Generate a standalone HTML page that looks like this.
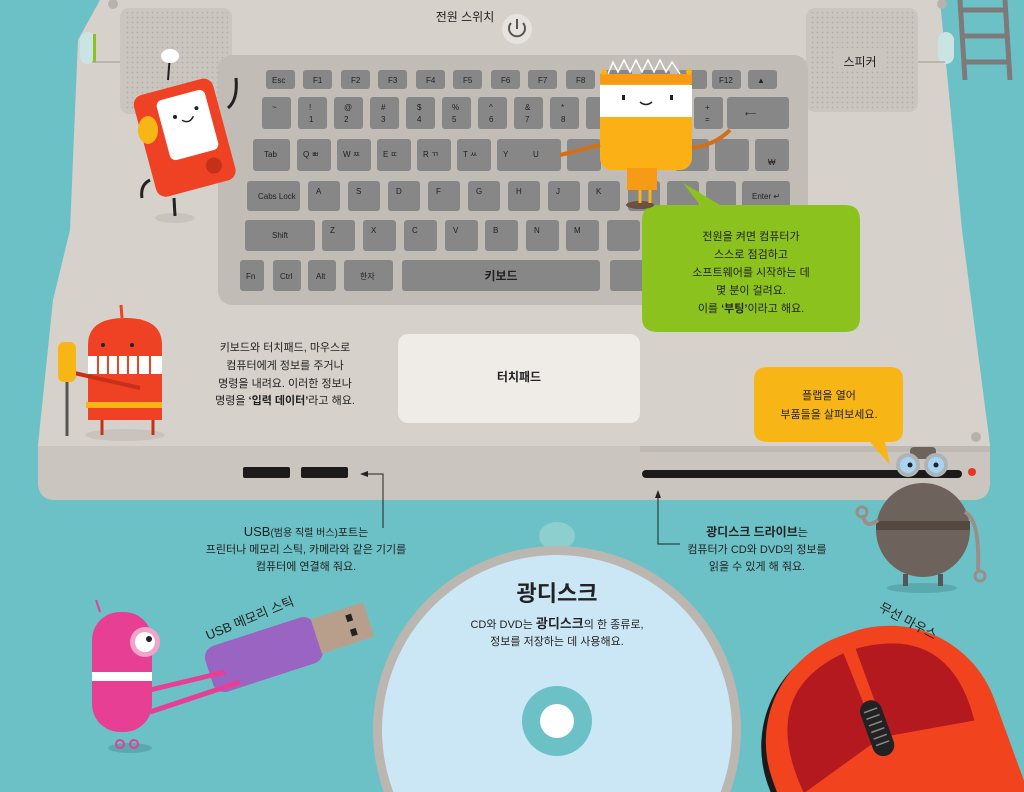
<!DOCTYPE html>
<html><head><meta charset="utf-8"><style>
html,body{margin:0;padding:0;width:1024px;height:792px;overflow:hidden;background:#6cc1c7}
svg{display:block}
text{font-family:"Liberation Sans","Noto Sans CJK KR",sans-serif;fill:#222}
.k{fill:#878787}
.kt{font-size:8px;fill:#e8e8e8}
.t{font-size:11px;text-anchor:middle}
.b{font-weight:bold}
</style></head><body>
<svg width="1024" height="792" viewBox="0 0 1024 792">
<rect width="1024" height="792" fill="#6cc1c7"/>
<g stroke="#7d7b79" stroke-width="5" fill="none"><line x1="960" y1="0" x2="965" y2="80"/><line x1="1005" y1="0" x2="1010" y2="80"/><line x1="962" y1="10" x2="1006" y2="10"/><line x1="963" y1="36" x2="1008" y2="36"/><line x1="964" y1="62" x2="1009" y2="62"/></g>
<path d="M100,0 L940,0 L962,230 L990,445 L990,482 Q990,500 972,500 L56,500 Q38,500 38,482 L38,445 L53,300 L70,230 L78,40 Z" fill="#d6d1cb"/>
<path d="M38,446 L990,446 L990,482 Q990,500 972,500 L56,500 Q38,500 38,482 Z" fill="#cbc5bf"/>
<path d="M640,446 L990,446 L990,452 L640,452 Z" fill="#bfb9b3"/>
<rect x="80" y="32" width="16" height="32" rx="8" fill="#c9e4e2"/><rect x="93" y="34" width="3" height="28" fill="#8cc21e"/>
<rect x="938" y="32" width="16" height="32" rx="8" fill="#c9e4e2"/>
<line x1="92" y1="62" x2="945" y2="62" stroke="#a9a39d" stroke-width="1.2"/>
<circle cx="113" cy="4" r="5" fill="#b8b2ac"/><circle cx="942" cy="4" r="5" fill="#b8b2ac"/><circle cx="976" cy="437" r="5" fill="#b8b2ac"/>
<defs><pattern id="d" width="5" height="5" patternUnits="userSpaceOnUse"><circle cx="2.5" cy="2.5" r="0.9" fill="#b3ada7"/></pattern></defs>
<rect x="120" y="8" width="112" height="106" rx="9" fill="#cbc5bf"/><rect x="124" y="12" width="104" height="98" fill="url(#d)"/>
<rect x="806" y="8" width="112" height="104" rx="9" fill="#cbc5bf"/><rect x="810" y="12" width="104" height="96" fill="url(#d)"/>
<rect x="836" y="48" width="48" height="20" fill="#cbc5bf"/>
<text x="860" y="66" style="font-size:12px;text-anchor:middle">스피커</text>
<circle cx="517" cy="29" r="15" fill="#e6e2de"/>
<path d="M511,23 A8,8 0 1 0 523,23" fill="none" stroke="#555" stroke-width="2"/><line x1="517" y1="19" x2="517" y2="29" stroke="#555" stroke-width="2"/>
<text x="465" y="21" style="font-size:12px;text-anchor:middle">전원 스위치</text>
<rect x="218" y="55" width="590" height="250" rx="14" fill="#c2bcb6"/>
<g class="k">
<rect x="266" y="70" width="29" height="19" rx="3"/>
<rect x="303" y="70" width="29" height="19" rx="3"/><rect x="341" y="70" width="29" height="19" rx="3"/><rect x="378" y="70" width="29" height="19" rx="3"/><rect x="416" y="70" width="29" height="19" rx="3"/><rect x="453" y="70" width="29" height="19" rx="3"/><rect x="491" y="70" width="29" height="19" rx="3"/><rect x="528" y="70" width="29" height="19" rx="3"/><rect x="566" y="70" width="29" height="19" rx="3"/><rect x="603" y="70" width="29" height="19" rx="3"/><rect x="641" y="70" width="29" height="19" rx="3"/><rect x="678" y="70" width="29" height="19" rx="3"/><rect x="712" y="70" width="29" height="19" rx="3"/><rect x="748" y="70" width="29" height="19" rx="3"/>
<rect x="262" y="97" width="29" height="32" rx="3"/><rect x="298" y="97" width="29" height="32" rx="3"/><rect x="334" y="97" width="29" height="32" rx="3"/><rect x="370" y="97" width="29" height="32" rx="3"/><rect x="406" y="97" width="29" height="32" rx="3"/><rect x="442" y="97" width="29" height="32" rx="3"/><rect x="478" y="97" width="29" height="32" rx="3"/><rect x="514" y="97" width="29" height="32" rx="3"/><rect x="550" y="97" width="29" height="32" rx="3"/><rect x="586" y="97" width="29" height="32" rx="3"/><rect x="622" y="97" width="29" height="32" rx="3"/><rect x="658" y="97" width="29" height="32" rx="3"/><rect x="694" y="97" width="29" height="32" rx="3"/><rect x="727" y="97" width="62" height="32" rx="3"/>
<rect x="253" y="139" width="37" height="32" rx="3"/><rect x="297" y="139" width="34" height="32" rx="3"/><rect x="337" y="139" width="34" height="32" rx="3"/><rect x="377" y="139" width="34" height="32" rx="3"/><rect x="417" y="139" width="34" height="32" rx="3"/><rect x="457" y="139" width="34" height="32" rx="3"/><rect x="497" y="139" width="34" height="32" rx="3"/><rect x="527" y="139" width="34" height="32" rx="3"/><rect x="567" y="139" width="34" height="32" rx="3"/><rect x="675" y="139" width="34" height="32" rx="3"/><rect x="715" y="139" width="34" height="32" rx="3"/><rect x="755" y="139" width="34" height="32" rx="3"/>
<rect x="247" y="181" width="53" height="30" rx="3"/><rect x="308" y="181" width="32" height="30" rx="3"/><rect x="348" y="181" width="32" height="30" rx="3"/><rect x="388" y="181" width="32" height="30" rx="3"/><rect x="428" y="181" width="32" height="30" rx="3"/><rect x="468" y="181" width="32" height="30" rx="3"/><rect x="508" y="181" width="32" height="30" rx="3"/><rect x="548" y="181" width="32" height="30" rx="3"/><rect x="588" y="181" width="32" height="30" rx="3"/><rect x="628" y="181" width="32" height="30" rx="3"/><rect x="667" y="181" width="32" height="30" rx="3"/><rect x="706" y="181" width="30" height="30" rx="3"/><rect x="742" y="181" width="48" height="30" rx="3"/>
<rect x="245" y="220" width="70" height="31" rx="3"/><rect x="322" y="220" width="33" height="31" rx="3"/><rect x="363" y="220" width="33" height="31" rx="3"/><rect x="404" y="220" width="33" height="31" rx="3"/><rect x="445" y="220" width="33" height="31" rx="3"/><rect x="485" y="220" width="33" height="31" rx="3"/><rect x="526" y="220" width="33" height="31" rx="3"/><rect x="566" y="220" width="33" height="31" rx="3"/><rect x="607" y="220" width="33" height="31" rx="3"/>
<rect x="240" y="260" width="24" height="31" rx="3"/><rect x="273" y="260" width="28" height="31" rx="3"/><rect x="308" y="260" width="28" height="31" rx="3"/><rect x="344" y="260" width="49" height="31" rx="3"/><rect x="402" y="260" width="198" height="31" rx="3"/><rect x="610" y="260" width="40" height="31" rx="3"/>
</g>
<g class="kt">
<text x="272" y="83">Esc</text><text x="313" y="83">F1</text><text x="351" y="83">F2</text><text x="388" y="83">F3</text><text x="426" y="83">F4</text><text x="463" y="83">F5</text><text x="501" y="83">F6</text><text x="538" y="83">F7</text><text x="576" y="83">F8</text><text x="719" y="83">F12</text><text x="757" y="83">▲</text>
<text x="272" y="110">~</text><text x="309" y="110">!</text><text x="344" y="110">@</text><text x="381" y="110">#</text><text x="417" y="110">$</text><text x="452" y="110">%</text><text x="489" y="110">^</text><text x="525" y="110">&amp;</text><text x="561" y="110">*</text><text x="705" y="110">+</text>
<text x="309" y="122">1</text><text x="344" y="122">2</text><text x="381" y="122">3</text><text x="417" y="122">4</text><text x="452" y="122">5</text><text x="489" y="122">6</text><text x="525" y="122">7</text><text x="561" y="122">8</text><text x="705" y="122">=</text><text x="745" y="116">⟵</text>
<text x="264" y="157">Tab</text><text x="303" y="157">Q ㅃ</text><text x="343" y="157">W ㅉ</text><text x="383" y="157">E ㄸ</text><text x="423" y="157">R ㄲ</text><text x="463" y="157">T ㅆ</text><text x="503" y="157">Y</text><text x="533" y="157">U</text><text x="768" y="165">₩</text>
<text x="258" y="199">Cabs Lock</text><text x="316" y="194">A</text><text x="356" y="194">S</text><text x="396" y="194">D</text><text x="436" y="194">F</text><text x="476" y="194">G</text><text x="516" y="194">H</text><text x="556" y="194">J</text><text x="596" y="194">K</text><text x="752" y="199">Enter ↵</text>
<text x="272" y="238">Shift</text><text x="330" y="233">Z</text><text x="371" y="233">X</text><text x="412" y="233">C</text><text x="453" y="233">V</text><text x="493" y="233">B</text><text x="534" y="233">N</text><text x="574" y="233">M</text>
<text x="246" y="279">Fn</text><text x="280" y="279">Ctrl</text><text x="316" y="279">Alt</text><text x="360" y="279">한자</text>
</g>
<text x="501" y="280" style="font-size:12px;text-anchor:middle" class="b">키보드</text>
<rect x="398" y="334" width="242" height="89" rx="10" fill="#efece8"/>
<text x="519" y="381" style="font-size:12px;text-anchor:middle" class="b">터치패드</text>
<rect x="243" y="467" width="47" height="11" rx="2" fill="#1c1a1a"/><rect x="301" y="467" width="47" height="11" rx="2" fill="#1c1a1a"/>
<rect x="642" y="470" width="320" height="8" rx="4" fill="#1c1a1a"/>
<circle cx="972" cy="472" r="4" fill="#e8361e"/>
<path d="M365,474 L383,474 L383,528" fill="none" stroke="#222" stroke-width="1"/><path d="M360,474 L368,471 L368,477Z" fill="#222"/>
<path d="M658,496 L658,544 L680,544" fill="none" stroke="#222" stroke-width="1"/><path d="M658,490 L655,498 L661,498Z" fill="#222"/>
<path d="M660,205 L700,205 L683,183 L720,205 L845,205 Q860,205 860,220 L860,318 Q860,332 845,332 L658,332 Q642,332 642,318 L642,220 Q642,205 660,205Z" fill="#8cc21e"/>
<g class="t"><text x="751" y="240">전원을 켜면 컴퓨터가</text><text x="751" y="258">스스로 점검하고</text><text x="751" y="276">소프트웨어를 시작하는 데</text><text x="751" y="294">몇 분이 걸려요.</text><text x="751" y="312">이를 <tspan class="b">‘부팅’</tspan>이라고 해요.</text></g>
<path d="M768,367 L890,367 Q903,367 903,380 L903,430 Q903,442 890,442 L885,442 L890,465 L870,442 L768,442 Q754,442 754,430 L754,380 Q754,367 768,367Z" fill="#f8b616"/>
<g class="t"><text x="829" y="399">플랩을 열어</text><text x="829" y="418">부품들을 살펴보세요.</text></g>
<g class="t"><text x="285" y="351">키보드와 터치패드, 마우스로</text><text x="285" y="369">컴퓨터에게 정보를 주거나</text><text x="285" y="387">명령을 내려요. 이러한 정보나</text><text x="285" y="404">명령을 <tspan class="b">‘입력 데이터’</tspan>라고 해요.</text></g>
<g class="t"><text x="306" y="536"><tspan style="font-size:13px">USB</tspan><tspan style="font-size:10px">(범용 직렬 버스)</tspan>포트는</text><text x="306" y="553">프린터나 메모리 스틱, 카메라와 같은 기기를</text><text x="306" y="570">컴퓨터에 연결해 줘요.</text></g>
<g class="t"><text x="757" y="536" class="b" style="font-size:12px">광디스크 드라이브<tspan style="font-weight:normal;font-size:11px">는</tspan></text><text x="757" y="553">컴퓨터가 CD와 DVD의 정보를</text><text x="757" y="570">읽을 수 있게 해 줘요.</text></g>
<ellipse cx="557" cy="536" rx="18" ry="14" fill="#8ccfce"/>
<circle cx="557" cy="730" r="184" fill="#bcb6b0"/>
<circle cx="557" cy="730" r="175" fill="#cbe7f6"/>
<circle cx="557" cy="721" r="35" fill="#6cc1c7"/><circle cx="557" cy="721" r="17" fill="#fff"/>
<text x="557" y="601" class="b" style="font-size:22px;text-anchor:middle">광디스크</text>
<g class="t"><text x="557" y="628">CD와 DVD는 <tspan class="b" style="font-size:13px">광디스크</tspan>의 한 종류로,</text><text x="557" y="645">정보를 저장하는 데 사용해요.</text></g>
<g transform="translate(-22,6) rotate(-20 890 700)">
<rect x="769" y="628" width="236" height="330" rx="112" fill="#1a1a1a"/>
<rect x="775" y="625" width="236" height="330" rx="112" fill="#f2431f"/>
<path d="M800,760 Q790,650 885,642 L888,735 Z" fill="#b3191f"/>
<path d="M898,642 Q995,650 985,750 L898,735 Z" fill="#b3191f"/>
<rect x="880" y="695" width="22" height="58" rx="11" fill="#222"/>
<g stroke="#888" stroke-width="1.5"><line x1="884" y1="705" x2="898" y2="705"/><line x1="884" y1="712" x2="898" y2="712"/><line x1="884" y1="719" x2="898" y2="719"/><line x1="884" y1="726" x2="898" y2="726"/><line x1="884" y1="733" x2="898" y2="733"/><line x1="884" y1="740" x2="898" y2="740"/></g>
</g>
<text x="0" y="0" transform="translate(878,610) rotate(28)" style="font-size:13px">무선 마우스</text>
<ellipse cx="922" cy="588" rx="35" ry="5" fill="#5aa9ae"/>
<circle cx="923" cy="530" r="47" fill="#6d625c"/>
<rect x="876" y="521" width="94" height="9" fill="#55483f"/>
<rect x="910" y="447" width="26" height="12" rx="4" fill="#6d625c"/>
<circle cx="908" cy="465" r="12" fill="#aeb4b4"/><circle cx="908" cy="465" r="8" fill="#a9d3f5"/><circle cx="910" cy="465" r="2.5" fill="#222"/>
<circle cx="936" cy="465" r="12" fill="#aeb4b4"/><circle cx="936" cy="465" r="8" fill="#a9d3f5"/><circle cx="936" cy="465" r="2.5" fill="#222"/>
<path d="M878,520 Q865,530 863,515" fill="none" stroke="#9a8f88" stroke-width="4"/><circle cx="862" cy="512" r="5" fill="none" stroke="#9a8f88" stroke-width="3"/>
<path d="M965,512 Q980,520 978,570" fill="none" stroke="#9a8f88" stroke-width="4"/><circle cx="980" cy="576" r="5" fill="none" stroke="#9a8f88" stroke-width="3"/>
<rect x="903" y="574" width="5" height="12" fill="#555"/><rect x="938" y="574" width="5" height="12" fill="#555"/>
<ellipse cx="125" cy="435" rx="40" ry="6" fill="#c9c3bd"/>
<path d="M88,345 Q88,318 125,318 Q162,318 162,345 L162,420 L88,420 Z" fill="#ef4123"/>
<line x1="122" y1="318" x2="121" y2="305" stroke="#ef4123" stroke-width="3"/>
<rect x="88" y="356" width="74" height="18" fill="#fff"/><g stroke="#ef4123" stroke-width="2"><line x1="98" y1="356" x2="98" y2="374"/><line x1="108" y1="356" x2="108" y2="374"/><line x1="118" y1="356" x2="118" y2="374"/><line x1="128" y1="356" x2="128" y2="374"/><line x1="138" y1="356" x2="138" y2="374"/><line x1="150" y1="356" x2="150" y2="374"/></g>
<circle cx="103" cy="345" r="2" fill="#222"/><circle cx="132" cy="345" r="2" fill="#222"/>
<rect x="86" y="402" width="76" height="6" fill="#f8b616"/>
<line x1="70" y1="372" x2="140" y2="388" stroke="#c62f18" stroke-width="4"/>
<rect x="58" y="342" width="18" height="40" rx="6" fill="#f8b616"/><line x1="67" y1="382" x2="67" y2="436" stroke="#555" stroke-width="3"/>
<line x1="102" y1="420" x2="102" y2="435" stroke="#c62f18" stroke-width="3"/><line x1="153" y1="420" x2="153" y2="435" stroke="#c62f18" stroke-width="3"/>
<ellipse cx="175" cy="218" rx="20" ry="5" fill="#c9c3bd"/>
<g transform="rotate(-15 185 135)">
<rect x="143" y="85" width="82" height="105" rx="10" fill="#ef4123"/>
<rect x="165" y="95" width="50" height="62" rx="6" fill="#fff"/>
<circle cx="180" cy="115" r="2" fill="#222"/><circle cx="203" cy="112" r="2" fill="#222"/><path d="M186,120 Q192,126 198,119" fill="none" stroke="#222" stroke-width="1.5"/>
<circle cx="205" cy="172" r="8" fill="#c62f18"/>
</g>
<ellipse cx="148" cy="130" rx="10" ry="14" fill="#f8b616"/>
<line x1="168" y1="80" x2="170" y2="55" stroke="#222" stroke-width="2"/><ellipse cx="170" cy="56" rx="9" ry="7" fill="#fff"/>
<path d="M228,108 Q238,100 236,78" fill="none" stroke="#222" stroke-width="3"/>
<path d="M150,180 Q140,185 142,198" fill="none" stroke="#222" stroke-width="3"/>
<line x1="174" y1="198" x2="175" y2="216" stroke="#222" stroke-width="3"/>
<ellipse cx="640" cy="205" rx="14" ry="4" fill="#6d5040"/>
<rect x="600" y="78" width="92" height="92" rx="12" fill="#fbb116"/>
<rect x="600" y="85" width="92" height="32" fill="#fff"/>
<rect x="600" y="74" width="92" height="10" fill="#f79b16"/>
<path d="M608,74 L613,62 L618,72 L624,60 L630,72 L636,60 L642,72 L648,60 L654,72 L660,60 L666,72 L672,62 L680,74" fill="none" stroke="#fff" stroke-width="1.5"/>
<circle cx="604" cy="72" r="3" fill="#f8b616"/><circle cx="689" cy="72" r="3" fill="#f8b616"/>
<rect x="622" y="95" width="3" height="5" fill="#222"/><rect x="670" y="95" width="3" height="5" fill="#222"/><path d="M640,102 Q646,107 652,102" fill="none" stroke="#222" stroke-width="1.5"/>
<rect x="627" y="168" width="30" height="22" fill="#f79b16"/>
<path d="M600,145 Q580,150 560,155" fill="none" stroke="#d1701a" stroke-width="4"/>
<path d="M692,148 Q715,145 730,130" fill="none" stroke="#d1701a" stroke-width="4"/>
<line x1="640" y1="190" x2="640" y2="203" stroke="#f8b616" stroke-width="3"/><line x1="650" y1="190" x2="650" y2="203" stroke="#f8b616" stroke-width="3"/>
<g transform="rotate(-18 265 650)">
<rect x="205" y="630" width="115" height="48" rx="12" fill="#9a64c3"/>
<rect x="318" y="635" width="55" height="36" fill="#b79f8c"/>
<rect x="352" y="642" width="6" height="7" fill="#222"/><rect x="352" y="657" width="6" height="7" fill="#222"/>
</g>
<ellipse cx="130" cy="748" rx="22" ry="5" fill="#5aa9ae"/>
<rect x="92" y="612" width="60" height="120" rx="28" fill="#e73f94"/>
<circle cx="145" cy="642" r="15" fill="#f2a3c7"/><circle cx="145" cy="642" r="10" fill="#fff"/><circle cx="149" cy="639" r="3" fill="#222"/>
<rect x="92" y="672" width="60" height="9" fill="#fff"/>
<line x1="150" y1="690" x2="225" y2="672" stroke="#e73f94" stroke-width="5"/><line x1="150" y1="712" x2="240" y2="682" stroke="#e73f94" stroke-width="5"/>
<circle cx="120" cy="744" r="4" fill="none" stroke="#e73f94" stroke-width="2"/><circle cx="134" cy="744" r="4" fill="none" stroke="#e73f94" stroke-width="2"/>
<line x1="100" y1="612" x2="96" y2="600" stroke="#e73f94" stroke-width="2"/>
<text x="0" y="0" transform="translate(208,640) rotate(-22)" style="font-size:13px">USB 메모리 스틱</text>
</svg>
</body></html>
